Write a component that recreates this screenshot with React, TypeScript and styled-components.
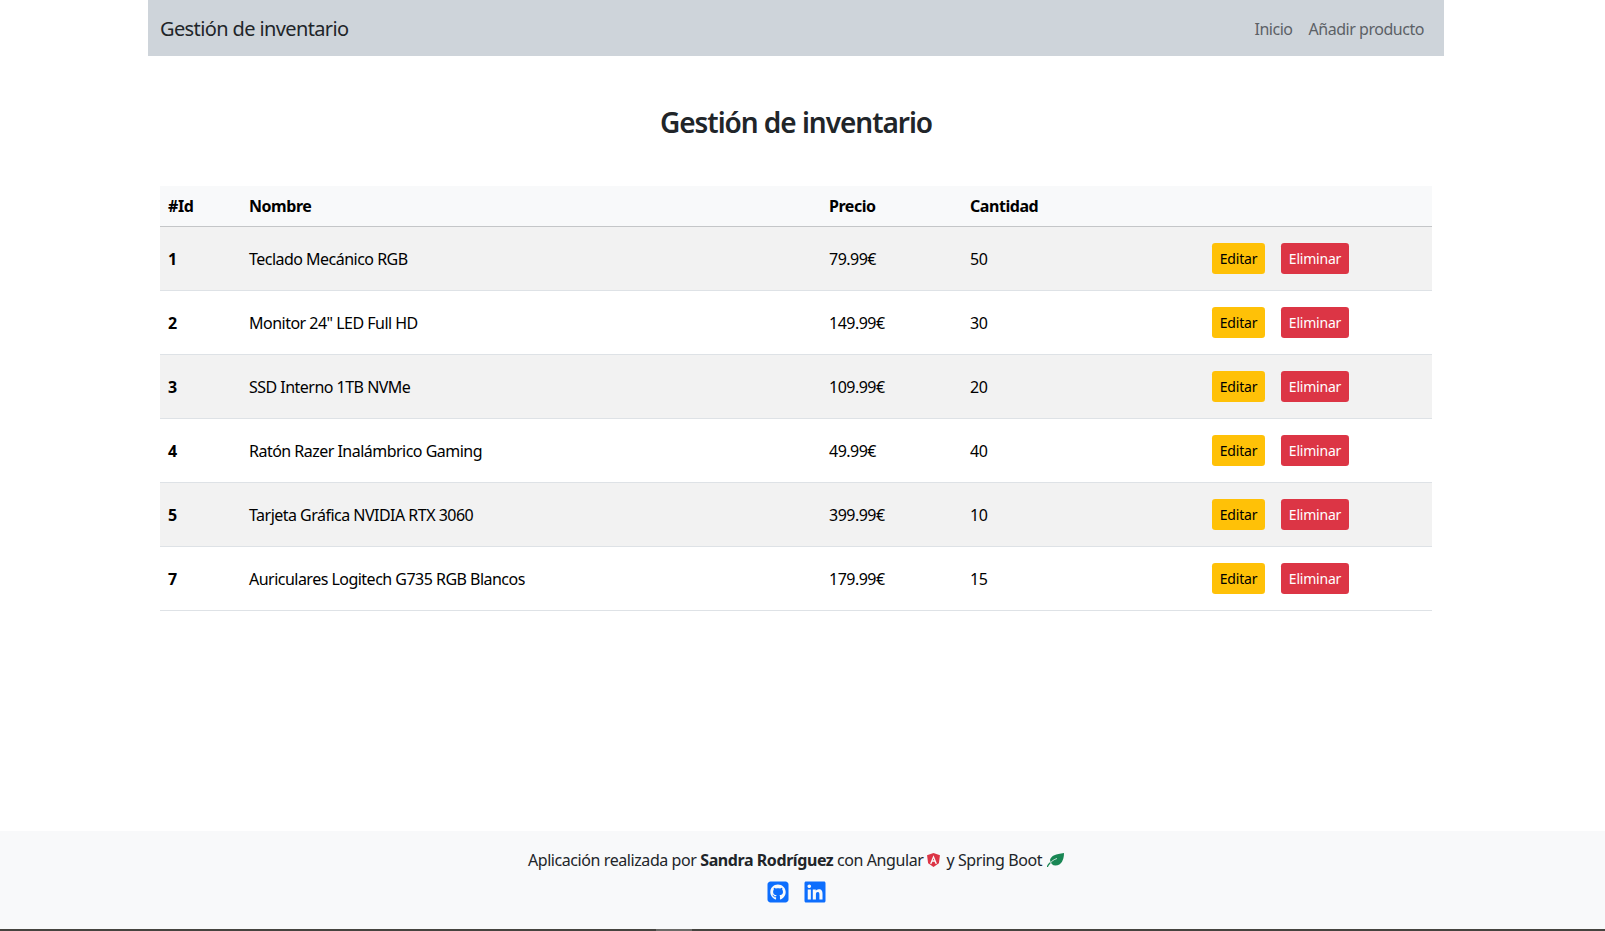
import { FaSquareGithub, FaLinkedin } from 'react-icons/fa6';
import styled, { createGlobalStyle } from 'styled-components';

type Product = {
  id: number;
  name: string;
  price: string;
  qty: number;
};

const products: Product[] = [
  { id: 1, name: 'Teclado Mecánico RGB', price: '79.99€', qty: 50 },
  { id: 2, name: 'Monitor 24" LED Full HD', price: '149.99€', qty: 30 },
  { id: 3, name: 'SSD Interno 1TB NVMe', price: '109.99€', qty: 20 },
  { id: 4, name: 'Ratón Razer Inalámbrico Gaming', price: '49.99€', qty: 40 },
  { id: 5, name: 'Tarjeta Gráfica NVIDIA RTX 3060', price: '399.99€', qty: 10 },
  { id: 7, name: 'Auriculares Logitech G735 RGB Blancos', price: '179.99€', qty: 15 },
];

const GlobalStyle = createGlobalStyle`
  * {
    box-sizing: border-box;
  }

  html,
  body {
    margin: 0;
    padding: 0;
    background: #fff;
  }

  body {
    font-family: 'Noto Sans', 'Open Sans', sans-serif;
    font-size: 16px;
    line-height: 1.5;
    color: #212529;
  }
`;

const Page = styled.div`
  display: flex;
  flex-direction: column;
  height: 931px;
  overflow: hidden;
`;

const Main = styled.main`
  flex: 1;
  padding-right: 13px;
`;

const Container = styled.div`
  width: 1296px;
  margin: 0 auto;
`;

const Navbar = styled.nav`
  display: flex;
  align-items: center;
  justify-content: space-between;
  height: 56px;
  padding: 2px 12px 0;
  background: #ced4da;
`;

const Brand = styled.a`
  font-size: 20px;
  letter-spacing: -0.62px;
  color: #212529;
`;

const NavLinks = styled.div`
  display: flex;
  gap: 16px;
  padding-right: 8px;
`;

const NavLink = styled.a`
  font-size: 16px;
  letter-spacing: -0.47px;
  color: #5c6166;
`;

const Title = styled.h1`
  margin: 49px 0 0;
  height: 73px;
  font-size: 28px;
  line-height: 34px;
  font-weight: 600;
  letter-spacing: -1.03px;
  text-align: center;
`;

const TableWrap = styled.div`
  padding: 8px 12px 0;
`;

const Table = styled.table`
  width: 100%;
  table-layout: fixed;
  border-collapse: collapse;
  color: #000;
`;

const HeadRow = styled.tr`
  height: 40px;
  background: #f8f9fa;
  border-bottom: 1px solid #c4c6c8;
`;

const HeadCell = styled.th`
  padding: 8px;
  font-size: 16px;
  font-weight: 700;
  letter-spacing: -0.45px;
  text-align: left;
`;

const Row = styled.tr<{ $striped: boolean }>`
  height: 64px;
  background: ${(p) => (p.$striped ? '#f2f2f2' : '#fff')};
  border-bottom: 1px solid #dee2e6;
`;

const Cell = styled.td`
  padding: 8px;
  font-size: 16px;
  letter-spacing: -0.52px;
`;

const IdCell = styled(Cell)`
  font-weight: 700;
`;

const Actions = styled.div`
  display: flex;
  gap: 16px;
`;

const Button = styled.button<{ $variant: 'warning' | 'danger' }>`
  width: ${(p) => (p.$variant === 'warning' ? '53px' : '68px')};
  height: 31px;
  padding: 0;
  border: 0;
  border-radius: 3.2px;
  font-family: inherit;
  font-size: 14px;
  letter-spacing: -0.2px;
  background: ${(p) => (p.$variant === 'warning' ? '#ffc107' : '#dc3545')};
  color: ${(p) => (p.$variant === 'warning' ? '#000' : '#fff')};
`;

const Footer = styled.footer`
  display: flex;
  flex-direction: column;
  align-items: center;
  height: 98px;
  padding: 17px 13px 0 0;
  background: #f8f9fa;
`;

const FooterText = styled.p`
  display: flex;
  align-items: center;
  margin: 0;
  font-size: 16px;
  line-height: 24px;
  letter-spacing: -0.42px;
  white-space: pre;
`;

const AngularMark = styled.svg`
  width: 13px;
  height: 14px;
  margin: 0 6px 0 4px;
`;

const LeafMark = styled.svg`
  width: 17px;
  height: 14px;
  margin-left: 5px;
`;

const Social = styled.div`
  display: flex;
  gap: 13px;
  margin-top: 7.5px;
  font-size: 24px;
  line-height: 1;
  color: #0d6efd;
`;

const Taskbar = styled.div`
  display: flex;
  height: 2px;
  background: #45443f;
`;

const TaskbarSpacer = styled.div<{ $active?: boolean }>`
  flex: ${(p) => (p.$active ? '0 0 36px' : '0 0 656px')};
  background: ${(p) => (p.$active ? '#6b6a67' : 'transparent')};
`;

export default function App() {
  return (
    <Page>
      <GlobalStyle />
      <Main>
        <Container>
          <Navbar>
            <Brand>Gestión de inventario</Brand>
            <NavLinks>
              <NavLink>Inicio</NavLink>
              <NavLink>Añadir producto</NavLink>
            </NavLinks>
          </Navbar>
          <Title>Gestión de inventario</Title>
          <TableWrap>
            <Table>
              <colgroup>
                <col width={81} />
                <col width={580} />
                <col width={141} />
                <col width={242} />
                <col width={228} />
              </colgroup>
              <thead>
                <HeadRow>
                  <HeadCell>#Id</HeadCell>
                  <HeadCell>Nombre</HeadCell>
                  <HeadCell>Precio</HeadCell>
                  <HeadCell>Cantidad</HeadCell>
                  <HeadCell />
                </HeadRow>
              </thead>
              <tbody>
                {products.map((product, i) => (
                  <Row key={product.id} $striped={i % 2 === 0}>
                    <IdCell>{product.id}</IdCell>
                    <Cell>{product.name}</Cell>
                    <Cell>{product.price}</Cell>
                    <Cell>{product.qty}</Cell>
                    <Cell>
                      <Actions>
                        <Button $variant="warning">Editar</Button>
                        <Button $variant="danger">Eliminar</Button>
                      </Actions>
                    </Cell>
                  </Row>
                ))}
              </tbody>
            </Table>
          </TableWrap>
        </Container>
      </Main>
      <Footer>
        <FooterText>
          <span>
            Aplicación realizada por <b>Sandra Rodríguez</b> con Angular
          </span>
          <AngularMark viewBox="0 0 24 26">
            <path
              fillRule="evenodd"
              fill="#dc3545"
              d="M12 0 L24 4 L22 19 L12 26 L2 19 L0 4 Z M12 4 L5.5 20 H8.6 L9.9 16.4 H14.1 L15.4 20 H18.5 Z M12 9.6 L13.2 13.6 H10.8 Z"
            />
          </AngularMark>
          <span>y Spring Boot</span>
          <LeafMark viewBox="0 0 34 28">
            <path
              fill="#198754"
              d="M6 14 C8 5 18 2 34 0 C34 13 29 25 17 25 C11 25 7 21 6 14 Z"
            />
            <path
              fill="none"
              stroke="#f8f9fa"
              strokeWidth="1.6"
              d="M6 21 C9 16 14 13 20 11"
            />
            <path
              fill="none"
              stroke="#198754"
              strokeWidth="2.4"
              strokeLinecap="round"
              d="M1 27 C2 24 4 22 6 20"
            />
          </LeafMark>
        </FooterText>
        <Social>
          <FaSquareGithub />
          <FaLinkedin />
        </Social>
      </Footer>
      <Taskbar>
        <TaskbarSpacer />
        <TaskbarSpacer $active />
      </Taskbar>
    </Page>
  );
}
